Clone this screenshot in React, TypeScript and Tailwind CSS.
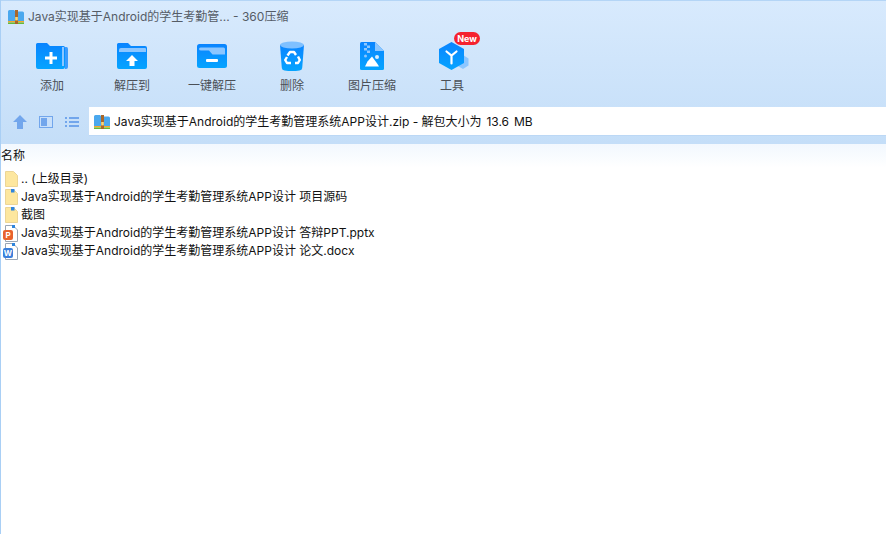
import React from "react";

const font = "font-['Inter','Noto_Sans_CJK_SC',sans-serif]";

const ArchiveIcon = ({ className }: { className: string }) => (
  <svg viewBox="0 0 16 16" className={className}>
    <path d="M0 2.500Q0 1 1.500 1H6l1.500 1.500h7Q16 2.500 16 4v8H0z" fill="#4aa8ee" />
    <rect x="0" y="12" width="16" height="1.500" fill="#f0a92e" />
    <rect x="0" y="13.500" width="16" height="1.500" fill="#64b93c" />
    <rect x="7" y="1" width="3" height="14" fill="#a8672a" />
    <rect x="7.200" y="8" width="2.600" height="3.400" fill="#f6d77a" />
  </svg>
);

const AddIcon = () => (
  <svg viewBox="0 0 32 28" className="h-[28px] w-[32px]">
    <defs>
      <linearGradient id="blueA" x1="0" y1="0" x2="0" y2="1">
        <stop offset="0" stopColor="#0a84ff" />
        <stop offset="1" stopColor="#05a4ff" />
      </linearGradient>
    </defs>
    <path d="M29 5h1.500Q32 5 32 7v18q0 2-2 2h-1z" fill="#3a9cff" />
    <path d="M1.500 1H11l3 3h13.500q1.500 0 1.500 2v19q0 2-2 2H2q-2 0-2-2V2.500Q0 1 1.500 1z" fill="url(#blueA)" />
    <path d="M26 5h2v19h-2z" fill="#8cc6ff" />
    <path d="M13.500 10h3v4.500H21v3h-4.500V22h-3v-4.500H9v-3h4.500z" fill="#fff" />
  </svg>
);

const ExtractIcon = () => (
  <svg viewBox="0 0 30 26" className="h-[26px] w-[30px]">
    <defs>
      <linearGradient id="blueB" x1="0" y1="0" x2="0" y2="1">
        <stop offset="0" stopColor="#0a84ff" />
        <stop offset="1" stopColor="#05a4ff" />
      </linearGradient>
    </defs>
    <path d="M1.500 0H11l3 3h14q2 0 2 2v19q0 2-2 2H2q-2 0-2-2V1.500Q0 0 1.500 0z" fill="url(#blueB)" />
    <path d="M2 7q0-2 2-2h24q1 0 1 1v3H2z" fill="#8cc6ff" />
    <path d="M15 12l6 6h-3.500v5h-5v-5H9z" fill="#fff" />
  </svg>
);

const OneKeyIcon = () => (
  <svg viewBox="0 0 30 24" className="h-[24px] w-[30px]">
    <defs>
      <linearGradient id="blueC" x1="0" y1="0" x2="0" y2="1">
        <stop offset="0" stopColor="#0a84ff" />
        <stop offset="1" stopColor="#05a4ff" />
      </linearGradient>
    </defs>
    <rect width="30" height="24" rx="2.500" fill="url(#blueC)" />
    <path d="M2 5q0-1.500 1.500-1.500h23q1.500 0 1.500 1.500v5.500H15.500L12 6.500H4q-2 0-2-1.500z" fill="#8cc6ff" />
    <rect x="9" y="15" width="12" height="3" rx="1" fill="#fff" />
  </svg>
);

const TrashIcon = () => (
  <svg viewBox="0 0 26 30" className="h-[30px] w-[26px]">
    <defs>
      <linearGradient id="blueD" x1="0" y1="0" x2="0" y2="1">
        <stop offset="0" stopColor="#0a84ff" />
        <stop offset="1" stopColor="#05a4ff" />
      </linearGradient>
    </defs>
    <path d="M1 4h24l-1.800 23q-.2 2-2.700 2.500-7.500 1-15 0Q3 29 2.800 27z" fill="url(#blueD)" />
    <ellipse cx="13" cy="4" rx="12" ry="3.500" fill="#7fc0ff" />
    <g fill="none" stroke="#fff" strokeWidth="2.400" strokeLinejoin="round">
      <path d="M8.500 14.500l2.500-3.500h4l2 3" />
      <path d="M19 15.500l1.800 3.500-1.800 3h-3" />
      <path d="M12 22H8l-1.800-3 1.800-3" />
    </g>
  </svg>
);

const ImageZipIcon = () => (
  <svg viewBox="0 0 24 28" className="h-[28px] w-[24px]">
    <defs>
      <linearGradient id="blueE" x1="0" y1="0" x2="0" y2="1">
        <stop offset="0" stopColor="#0a84ff" />
        <stop offset="1" stopColor="#05a4ff" />
      </linearGradient>
    </defs>
    <path d="M1.500 0H15l9 9v17.500Q24 28 22.500 28h-21Q0 28 0 26.500v-25Q0 0 1.500 0z" fill="url(#blueE)" />
    <path d="M15 0l9 9h-9z" fill="#8cc6ff" />
    <g fill="#8cc6ff">
      <rect x="4" y="1" width="3" height="2.500" />
      <rect x="7" y="3.500" width="3" height="2.500" />
      <rect x="4" y="6" width="3" height="2.500" />
      <rect x="7" y="8.500" width="3" height="2.500" />
      <circle cx="5.500" cy="14" r="1.500" />
    </g>
    <circle cx="17" cy="15" r="2" fill="#d8ecff" />
    <path d="M12 14.500l5.500 7.500 1.500 2.500H5l2.500-5z" fill="#fff" />
  </svg>
);

const ToolIcon = () => (
  <svg viewBox="0 0 30 30" className="ml-[4px] h-[30px] w-[30px]">
    <defs>
      <linearGradient id="blueF" x1="0" y1="0" x2="0" y2="1">
        <stop offset="0" stopColor="#0a84ff" />
        <stop offset="1" stopColor="#05a4ff" />
      </linearGradient>
    </defs>
    <path d="M24 14l5.500 3.500v7L24 28l-6-3.500v-7z" fill="#8cc6ff" />
    <path d="M12.500 1l12.500 7v14l-12.500 7L0 22V8z" fill="url(#blueF)" />
    <path d="M7.500 10.500l5 4 5-4M12.500 14.500v8" stroke="#fff" strokeWidth="2.200" fill="none" strokeLinecap="round" />
  </svg>
);

const FolderRow = ({ mark }: { mark?: boolean }) => (
  <svg viewBox="0 0 13 16" className="h-[16px] w-[13px] shrink-0">
    <path d="M.5.500H8.500L12.500 4.500v11H.5z" fill="#fde79f" stroke="#ecd596" />
    {mark && <rect x="6" y="0" width="3.500" height="3.500" fill="#2f85dc" />}
  </svg>
);

const DocIcon = ({ color, letter }: { color: string; letter: string }) => (
  <span className="relative flex h-[17px] w-[15px] shrink-0">
    <svg viewBox="0 0 15 17" className="h-[17px] w-[15px]">
      <path d="M2.500.500H10L14.500 5v11.500h-12z" fill="#fff" stroke="#9aa6b5" />
      <rect x="9" y="0" width="3" height="3" fill="#2f85dc" />
      <rect x="0" y="5" width="10" height="10" rx="2" fill={color} />
    </svg>
    <span className="absolute left-0 top-[5px] w-[10px] text-center text-[8px] leading-[10px] font-bold text-white">{letter}</span>
  </span>
);

const tools = [
  { label: "添加", icon: <AddIcon /> },
  { label: "解压到", icon: <ExtractIcon /> },
  { label: "一键解压", icon: <OneKeyIcon /> },
  { label: "删除", icon: <TrashIcon /> },
  { label: "图片压缩", icon: <ImageZipIcon /> },
  { label: "工具", icon: <ToolIcon />, badge: true },
];

const App = () => {
  return (
    <div className={`flex h-[534px] w-[886px] flex-col overflow-hidden border-l border-[#a9cff5] bg-white ${font}`}>
      {/* top area */}
      <div className="flex h-[144px] flex-col border-t border-[#b4d5f6] bg-gradient-to-b from-[#d8eafd] to-[#c4def8]">
        <div className="flex h-[30px] items-center gap-[4px] pl-[7px] pt-[1px]">
          <ArchiveIcon className="h-[16px] w-[16px]" />
          <span className="text-[12px] text-[#555c66]">Java实现基于Android的学生考勤管... - 360压缩</span>
        </div>
        <div className="flex h-[76px] pl-[11px]">
          {tools.map((t) => (
            <div key={t.label} className="relative flex h-full w-[80px] flex-col items-center">
              <div className="flex h-[47px] items-center justify-center pt-[3px]">{t.icon}</div>
              <span className="text-[12px] leading-[16px] text-[#4b5057]">{t.label}</span>
              {t.badge && (
                <span className="absolute left-[42px] top-[1px] flex h-[13px] w-[26px] items-center justify-center rounded-full bg-[#f5222f] text-[9px] font-bold text-white">
                  New
                </span>
              )}
            </div>
          ))}
        </div>
        <div className="flex h-[29px] items-center">
          <div className="flex w-[88px] items-center gap-[12px] pl-[12px]">
            <svg viewBox="0 0 14 14" className="h-[14px] w-[14px]">
              <path d="M7 0l7 7H10v7H4V7H0z" fill="#72a6ec" />
            </svg>
            <svg viewBox="0 0 14 12" className="h-[12px] w-[14px]">
              <rect x=".5" y=".5" width="13" height="11" fill="#c9e0fa" stroke="#72a6ec" />
              <rect x="2" y="2" width="6" height="8" fill="#72a6ec" />
            </svg>
            <svg viewBox="0 0 14 10" className="h-[10px] w-[14px]">
              <path d="M0 0h2v2H0zM4 0h10v2H4zM0 4h2v2H0zM4 4h10v2H4zM0 8h2v2H0zM4 8h10v2H4z" fill="#72a6ec" />
            </svg>
          </div>
          <div className="flex h-[29px] flex-1 items-center gap-[4px] border-b border-[#bcd8f5] bg-white pl-[5px] pt-[1px]">
            <ArchiveIcon className="h-[16px] w-[16px]" />
            <span className="text-[12px] text-[#111]">
              Java实现基于Android的学生考勤管理系统APP设计.zip - <span className="[word-spacing:1.5px]">解包大小为 13.6 MB</span>
            </span>
          </div>
        </div>
      </div>
      {/* file list */}
      <div className="flex h-[24px] items-center bg-gradient-to-b from-[#f2f8fe] to-white text-[12px] text-[#111]">
        名称
      </div>
      <div className="flex flex-col pt-[2px] text-[12px] text-[#111]">
        <div className="flex h-[18px] items-center gap-[3px] pl-[4px]">
          <FolderRow />
          <span>.. (上级目录)</span>
        </div>
        <div className="flex h-[18px] items-center gap-[3px] pl-[4px]">
          <FolderRow mark />
          <span>Java实现基于Android的学生考勤管理系统APP设计 项目源码</span>
        </div>
        <div className="flex h-[18px] items-center gap-[3px] pl-[4px]">
          <FolderRow mark />
          <span>截图</span>
        </div>
        <div className="flex h-[18px] items-center gap-[3px] pl-[2px]">
          <DocIcon color="#e8622e" letter="P" />
          <span>Java实现基于Android的学生考勤管理系统APP设计 答辩PPT.pptx</span>
        </div>
        <div className="flex h-[18px] items-center gap-[3px] pl-[2px]">
          <DocIcon color="#3a7fdb" letter="W" />
          <span>Java实现基于Android的学生考勤管理系统APP设计 论文.docx</span>
        </div>
      </div>
    </div>
  );
};

export default App;
